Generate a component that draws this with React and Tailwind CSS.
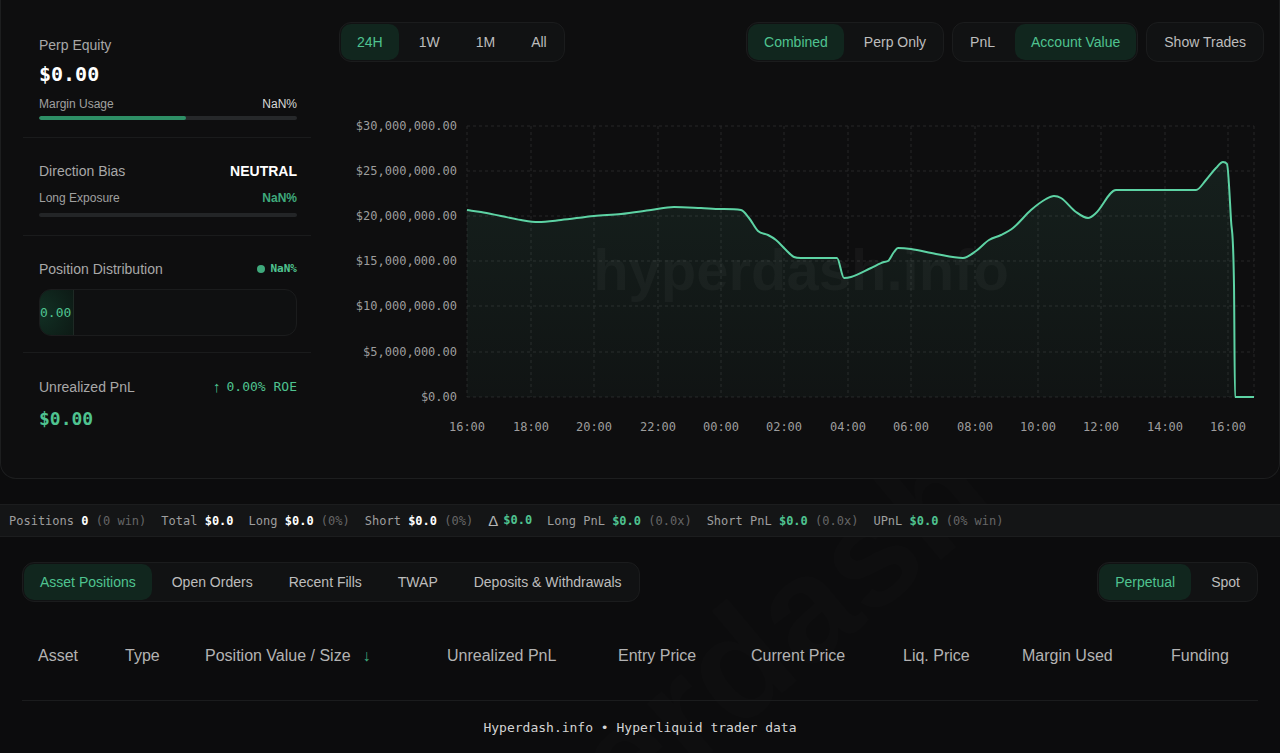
import React from 'react'

const MONO = "font-['DejaVu_Sans_Mono',monospace]"

const PTS = [
  [466,210],[480,212],[500,216],[520,220],[537,222],[560,220],[593,216],[620,214],[650,210],[673,207],
  [700,208],[720,209],[740,210],[748,218],[757,231],[767,235],[775,240],[785,250],[793,257],[800,258],
  [836,258],[843,278],[850,277],[870,268],[883,262],[887,261],[893,252],[897,248],[910,249],[935,254],
  [962,258],[975,251],[988,240],[1000,235],[1012,228],[1030,210],[1045,199],[1053,196],[1060,198],[1075,212],
  [1087,218],[1095,213],[1115,190],[1195,190],[1205,180],[1215,168],[1222,162],[1226,164],[1230,220],[1233,285],
  [1234,397],[1253,397],
]

// monotone-x cubic, same idea as d3 curveMonotoneX
function monotonePath(pts){
  const n = pts.length
  const m = [], t = []
  for(let i=0;i<n-1;i++){
    m[i] = (pts[i+1][1]-pts[i][1])/(pts[i+1][0]-pts[i][0])
  }
  t[0] = m[0]; t[n-1] = m[n-2]
  for(let i=1;i<n-1;i++) t[i] = m[i-1]*m[i] <= 0 ? 0 : (m[i-1]+m[i])/2
  for(let i=0;i<n-1;i++){
    if(m[i] === 0){ t[i] = 0; t[i+1] = 0; continue }
    const a = t[i]/m[i], b = t[i+1]/m[i], s = a*a+b*b
    if(s > 9){ const k = 3/Math.sqrt(s); t[i] = k*a*m[i]; t[i+1] = k*b*m[i] }
  }
  let d = `M${pts[0][0]},${pts[0][1]}`
  for(let i=0;i<n-1;i++){
    const [x0,y0] = pts[i], [x1,y1] = pts[i+1], h = (x1-x0)/3
    d += ` C${x0+h},${y0+t[i]*h} ${x1-h},${y1-t[i+1]*h} ${x1},${y1}`
  }
  return d
}

const LINE = monotonePath(PTS)
const XS = [466,530,593,657,720,783,847,910,974,1037,1100,1164,1227]
const XL = ['16:00','18:00','20:00','22:00','00:00','02:00','04:00','06:00','08:00','10:00','12:00','14:00','16:00']
const YS = [126,171,216,261,306,352,397]
const YL = ['$30,000,000.00','$25,000,000.00','$20,000,000.00','$15,000,000.00','$10,000,000.00','$5,000,000.00','$0.00']

function Seg({ items, active }){
  return (
    <div className="flex gap-1 p-px rounded-xl border border-[#1b1c1d] bg-[#111213]">
      {items.map(it => (
        <button key={it} className={`h-9 px-4 rounded-[10px] text-sm ${it === active ? 'bg-[#11261e] text-[#4fc390]' : 'text-[#bdbdbd]'}`}>{it}</button>
      ))}
    </div>
  )
}

function Chart(){
  return (
    <svg width="925" height="400" viewBox="338 62 925 400" className="block">
      <defs>
        <linearGradient id="fillg" x1="0" y1="0" x2="0" y2="1">
          <stop offset="0%" stopColor="#5fd4a8" stopOpacity="0.09" />
          <stop offset="100%" stopColor="#5fd4a8" stopOpacity="0.03" />
        </linearGradient>
      </defs>
      {YS.map(y => <line key={y} x1="466" x2="1253" y1={y} y2={y} stroke="#262728" strokeDasharray="3 3" />)}
      {XS.map(x => <line key={x} x1={x} x2={x} y1="126" y2="397" stroke="#262728" strokeDasharray="3 3" />)}
      <line x1="1253" x2="1253" y1="126" y2="397" stroke="#262728" strokeDasharray="3 3" />
      <text x="800" y="290" textAnchor="middle" fontSize="58" fontWeight="700" fontFamily="Liberation Sans, Arial, sans-serif" fill="#ffffff" fillOpacity="0.035">hyperdash.info</text>
      <path d={`${LINE} L1253,397 L466,397 Z`} fill="url(#fillg)" />
      <path d={LINE} fill="none" stroke="#5dd3a4" strokeWidth="2" strokeLinejoin="round" />
      {YS.map((y,i) => (
        <text key={i} x="456" y={y+4} textAnchor="end" fontSize="12" fontFamily="DejaVu Sans Mono, monospace" fill="#9d9d9d">{YL[i]}</text>
      ))}
      {XS.map((x,i) => (
        <text key={i} x={x} y="431" textAnchor="middle" fontSize="12" fontFamily="DejaVu Sans Mono, monospace" fill="#9d9d9d">{XL[i]}</text>
      ))}
    </svg>
  )
}

function Stat({ label, value, extra, green }){
  return (
    <span className="whitespace-pre">
      <span className="text-[#9e9e9e]">{label} </span>
      <span className={`font-bold ${green ? 'text-[#4fc390]' : 'text-white'}`}>{value}</span>
      {extra && <span className="text-[#666]"> {extra}</span>}
    </span>
  )
}

const COLS = [
  ['Asset','w-[87px]'],['Type','w-[80px]'],['Position Value / Size','w-[242px]'],['Unrealized PnL','w-[171px]'],
  ['Entry Price','w-[133px]'],['Current Price','w-[152px]'],['Liq. Price','w-[119px]'],['Margin Used','w-[149px]'],['Funding','flex-1'],
]

export default function App(){
  return (
    <div className="relative min-h-screen bg-[#0c0c0d] text-white overflow-hidden font-['Liberation_Sans',Arial,sans-serif]">
      {/* faint diagonal watermark behind the positions table */}
      <div className="pointer-events-none absolute left-[300px] top-[600px] -rotate-[40deg] text-[150px] font-bold text-white/[0.012] whitespace-nowrap">hyperdash</div>

      {/* top card */}
      <div className="relative flex h-[479px] pl-[22px] pr-[17px] pt-[22px] bg-[#0e0e0f] border-x border-b border-[#1d1e1f] rounded-b-2xl">
        <div className="w-[288px] shrink-0">
          <div className="pl-4 pr-[14px] pt-[13px] pb-[17px] border-b border-[#1a1b1c]">
            <div className="h-5 text-sm text-[#a8a8a8]">Perp Equity</div>
            <div className={`mt-[5px] h-7 text-xl font-bold leading-7 ${MONO}`}>$0.00</div>
            <div className="mt-2 h-4 flex justify-between items-center text-xs">
              <span className="text-[#a0a0a0]">Margin Usage</span>
              <span className="text-[#d8d8d8]">NaN%</span>
            </div>
            <div className="mt-1 h-1 rounded-full bg-[#26282a] overflow-hidden">
              <div className="h-full w-[57%] rounded-full bg-[#2e8f66]" />
            </div>
          </div>
          <div className="pl-4 pr-[14px] pt-[23px] pb-[18px] border-b border-[#1a1b1c]">
            <div className="h-5 flex justify-between items-center text-sm">
              <span className="text-[#a8a8a8]">Direction Bias</span>
              <span className="font-bold text-white">NEUTRAL</span>
            </div>
            <div className="mt-[9px] h-4 flex justify-between items-center text-xs">
              <span className="text-[#a0a0a0]">Long Exposure</span>
              <span className="font-bold text-[#3fa97c]">NaN%</span>
            </div>
            <div className="mt-[7px] h-1 rounded-full bg-[#232527]" />
          </div>
          <div className="pl-4 pr-[14px] pt-[23px] pb-4 border-b border-[#1a1b1c]">
            <div className="h-5 flex justify-between items-center text-sm">
              <span className="text-[#a8a8a8]">Position Distribution</span>
              <span className={`flex items-center gap-1.5 text-[11px] font-bold text-[#4fc390] ${MONO}`}>
                <span className="w-2 h-2 rounded-full bg-[#3fa97c]" />NaN%
              </span>
            </div>
            <div className="mt-[10px] h-[47px] flex rounded-xl border border-[#1b1c1d] bg-[#0f1011] overflow-hidden">
              <div className={`w-[34px] flex items-center border-r border-[#1e2a25] bg-[radial-gradient(circle_at_left,#123024,#0d1a15)] text-[13px] text-[#4fc390] ${MONO}`}>0.00</div>
            </div>
          </div>
          <div className="pl-4 pr-[14px] pt-6">
            <div className="h-5 flex justify-between items-center text-sm">
              <span className="text-[#a8a8a8]">Unrealized PnL</span>
              <span className="flex items-center text-[#4fc390]">
                <span className="text-[15px] mr-1.5">↑</span>
                <span className={`text-[13px] ${MONO}`}>0.00% ROE</span>
              </span>
            </div>
            <div className={`mt-2 h-7 leading-7 text-lg font-bold text-[#4fc390] ${MONO}`}>$0.00</div>
          </div>
        </div>

        <div className="ml-7 flex-1">
          <div className="flex justify-between h-10">
            <Seg items={['24H','1W','1M','All']} active="24H" />
            <div className="flex gap-2">
              <Seg items={['Combined','Perp Only']} active="Combined" />
              <Seg items={['PnL','Account Value']} active="Account Value" />
              <Seg items={['Show Trades']} active="" />
            </div>
          </div>
          <Chart />
        </div>
      </div>

      {/* stats strip */}
      <div className={`relative mt-[25px] h-[33px] flex items-center gap-[15px] pl-[9px] bg-[#141516] border-y border-[#1c1d1e] text-xs ${MONO}`}>
        <Stat label="Positions" value="0" extra="(0 win)" />
        <Stat label="Total" value="$0.0" />
        <Stat label="Long" value="$0.0" extra="(0%)" />
        <Stat label="Short" value="$0.0" extra="(0%)" />
        <span className="flex items-center whitespace-pre">
          <span className="font-['Liberation_Sans',sans-serif] text-[15px] text-[#b5b5b5] mr-[5px]">Δ</span>
          <span className="font-bold text-[#4fc390]">$0.0</span>
        </span>
        <Stat label="Long PnL" value="$0.0" extra="(0.0x)" green />
        <Stat label="Short PnL" value="$0.0" extra="(0.0x)" green />
        <Stat label="UPnL" value="$0.0" extra="(0% win)" green />
      </div>

      {/* positions */}
      <div className="relative px-[22px]">
        <div className="mt-[25px] flex justify-between">
          <Seg items={['Asset Positions','Open Orders','Recent Fills','TWAP','Deposits & Withdrawals']} active="Asset Positions" />
          <Seg items={['Perpetual','Spot']} active="Perpetual" />
        </div>
        <div className="mt-8 pb-[22px] border-b border-[#1b1c1d]">
          <div className="h-11 flex items-center text-base text-[#b3b3b3]">
            {COLS.map(([c, w]) => (
              <div key={c} className={`${w} pl-4 whitespace-nowrap`}>
                {c}{c === 'Position Value / Size' && <span className="ml-3 text-[#3fa97c]">↓</span>}
              </div>
            ))}
          </div>
        </div>
      </div>

      <div className={`relative pt-[17px] h-5 text-center text-[13px] text-[#d4d4d4] ${MONO}`}>Hyperdash.info • Hyperliquid trader data</div>
    </div>
  )
}
